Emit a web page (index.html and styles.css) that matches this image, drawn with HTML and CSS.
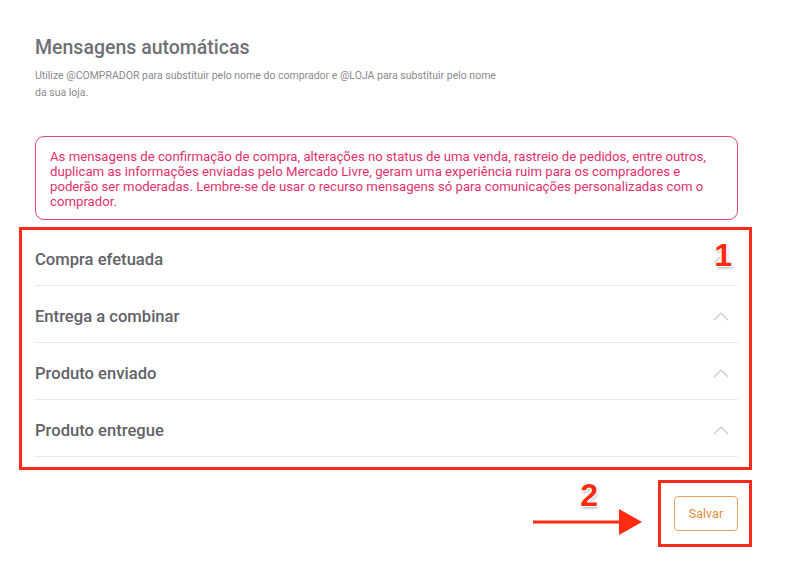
FILE: index.html
```html
<!DOCTYPE html>
<html lang="pt-BR">
<head>
<meta charset="utf-8">
<title>Mensagens automáticas</title>
<link rel="stylesheet" href="styles.css">
</head>
<body>
<main class="page">
  <header class="head">
    <h1 class="title">Mensagens automáticas</h1>
    <p class="subtitle">Utilize @COMPRADOR para substituir pelo nome do comprador e @LOJA para substituir pelo nome da sua loja.</p>
  </header>

  <div class="alert">
    As mensagens de confirmação de compra, alterações no status de uma venda, rastreio de pedidos, entre outros, duplicam as informações enviadas pelo Mercado Livre, geram uma experiência ruim para os compradores e poderão ser moderadas. Lembre-se de usar o recurso mensagens só para comunicações personalizadas com o comprador.
  </div>

  <section class="list">
    <div class="row"><span class="label">Compra efetuada</span><svg class="chev" viewBox="0 0 16 10" width="16" height="10"><path d="M1 9 L8 2 L15 9" fill="none" stroke="#c9c9cc" stroke-width="1.2"/></svg></div>
    <div class="row"><span class="label">Entrega a combinar</span><svg class="chev" viewBox="0 0 16 10" width="16" height="10"><path d="M1 9 L8 2 L15 9" fill="none" stroke="#c9c9cc" stroke-width="1.2"/></svg></div>
    <div class="row"><span class="label">Produto enviado</span><svg class="chev" viewBox="0 0 16 10" width="16" height="10"><path d="M1 9 L8 2 L15 9" fill="none" stroke="#c9c9cc" stroke-width="1.2"/></svg></div>
    <div class="row"><span class="label">Produto entregue</span><svg class="chev" viewBox="0 0 16 10" width="16" height="10"><path d="M1 9 L8 2 L15 9" fill="none" stroke="#c9c9cc" stroke-width="1.2"/></svg></div>
    <div class="mark mark-list"></div>
    <span class="num num-1">1</span>
  </section>

  <footer class="actions">
    <button class="save">Salvar</button>
    <div class="mark mark-save"></div>
    <span class="num num-2">2</span>
    <svg class="arrow" viewBox="0 0 110 28" width="110" height="28"><path d="M0 14 L88 14" stroke="#ff2a10" stroke-width="3"/><path d="M86 1 L109 14 L86 27 Z" fill="#ff2a10"/></svg>
  </footer>
</main>
</body>
</html>
```

FILE: styles.css
```css
* { box-sizing: border-box; }
html, body { margin: 0; padding: 0; background: #fff; }
body { font-family: Roboto, "Noto Sans", Arial, sans-serif; }

.page {
  width: 804px;
  height: 564px;
  padding: 36px 66px 0 35px;
  display: flex;
  flex-direction: column;
  position: relative;
}

.head { width: 470px; }
.title {
  margin: 0;
  font-size: 19.5px;
  font-weight: 500;
  color: #707077;
  line-height: 24px;
}
.subtitle {
  margin: 7px 0 0;
  font-size: 10.5px;
  line-height: 17px;
  color: #8a8a8e;
  width: 462px;
}

.alert {
  margin-top: 35px;
  border: 1px solid #e8457a;
  border-radius: 9px;
  padding: 12px 14px 10px 14px;
  font-size: 13.2px;
  line-height: 15px;
  color: #e2306c;
  height: 84px;
}

.list {
  margin-top: 9px;
  position: relative;
  display: flex;
  flex-direction: column;
}
.row {
  height: 57px;
  border-bottom: 1px solid #ebebed;
  display: flex;
  align-items: center;
  justify-content: space-between;
  padding: 4px 9px 0 0;
}
.label {
  font-size: 16.6px;
  font-weight: 500;
  color: #626268;
}
.chev { display: block; }

.actions {
  position: relative;
  display: flex;
  justify-content: flex-end;
  margin-top: 39px;
}
.save {
  width: 64px;
  height: 35px;
  border: 1px solid #eea163;
  border-radius: 4px;
  background: #fff;
  color: #ea8a3c;
  font-family: Roboto, "Noto Sans", Arial, sans-serif;
  font-size: 12.5px;
  padding: 0;
}

/* annotation overlays */
.mark {
  position: absolute;
  border: 3px solid #ff2a1a;
  pointer-events: none;
}
.mark-list { left: -16px; right: -14px; top: -2px; bottom: -13px; }
.mark-save { right: -14px; top: -16px; width: 94px; height: 67px; }

.num {
  position: absolute;
  font-family: "Liberation Sans", Arial, sans-serif;
  font-weight: 700;
  font-size: 32px;
  line-height: 32px;
  color: #ff2a10;
  text-shadow: 0 0 2px #fff, 1px 1px 0 #fff, -1px -1px 0 #fff, 1px -1px 0 #fff, -1px 1px 0 #fff, 1px 2px 3px rgba(0,0,0,0.35);
}
.num-1 { right: 6px; top: 10px; }
.num-2 { right: 140px; top: -17px; }
.arrow { position: absolute; right: 95px; top: 12px; }
```
